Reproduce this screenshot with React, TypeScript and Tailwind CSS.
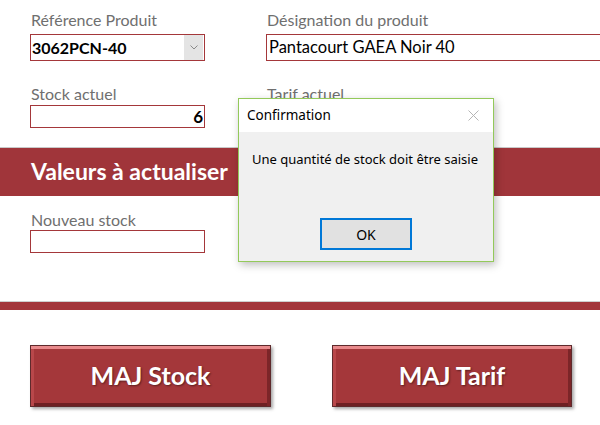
import React from "react";

const Label = ({ children }: { children: React.ReactNode }) => (
  <div className="h-[20px] text-[16px] leading-[20px] text-[#6f6f6f] pl-[1px]">{children}</div>
);

const ActionButton = ({ children }: { children: React.ReactNode }) => (
  <button
    type="button"
    className="h-[62px] flex items-center justify-center bg-[#a4373a] border border-[#5e2a2c] text-white font-bold text-[25px] shadow-[inset_0_3px_0_#e88a8c,inset_3px_0_0_#b8474a,inset_-3px_0_0_#7c2528,inset_0_-3px_0_#6e2023,2px_2px_3px_rgba(0,0,0,0.35)] [text-shadow:1px_1px_2px_rgba(0,0,0,0.45)]"
  >
    {children}
  </button>
);

export default function App() {
  return (
    <div className="relative w-[600px] h-[425px] overflow-hidden bg-white font-['Lato',sans-serif]">
      {/* top fields */}
      <div className="flex pt-[10px] pl-[30px]">
        <div className="w-[175px] shrink-0">
          <Label>Référence Produit</Label>
          <div className="mt-[4px] h-[27px] border border-[#a4373a] flex items-center">
            <span className="flex-1 pl-[1px] text-[16px] font-bold text-black">3062PCN-40</span>
            <span className="w-[19px] h-[25px] mr-[1px] bg-[#e4e4e4] flex items-center justify-center">
              <svg width="8" height="5" viewBox="0 0 8 5">
                <path d="M0.5 0.5 L4 4 L7.5 0.5" fill="none" stroke="#8a8a8a" strokeWidth="1" />
              </svg>
            </span>
          </div>
          <div className="mt-[23px]">
            <Label>Stock actuel</Label>
          </div>
          <div className="mt-[1px] h-[23px] border border-[#a4373a] flex items-center justify-end pr-[1px] text-[17px] font-bold text-black">
            6
          </div>
        </div>
        <div className="ml-[61px] w-[360px] shrink-0">
          <Label>Désignation du produit</Label>
          <div className="mt-[4px] h-[27px] border border-[#a4373a] flex items-center pl-[2px] text-[16.5px] text-black">
            Pantacourt GAEA Noir 40
          </div>
          <div className="mt-[23px]">
            <Label>Tarif actuel</Label>
          </div>
        </div>
      </div>

      {/* banner */}
      <div className="mt-[19px] h-[49px] border-t border-[#c9c9c9] bg-[#a0353a] flex items-center pl-[31px]">
        <span className="text-white font-bold text-[23px] pb-[2px]">Valeurs à actualiser</span>
      </div>

      <div className="pl-[30px] mt-[14px]">
        <Label>Nouveau stock</Label>
        <div className="w-[175px] h-[23px] border border-[#a4373a]" />
      </div>

      <div className="mt-[48px] h-[9px] border-t border-[#cfcfcf] bg-[#a3363b]" />

      <div className="mt-[35px] flex gap-[61px] pl-[30px]">
        <div className="w-[241px] flex flex-col">
          <ActionButton>MAJ Stock</ActionButton>
        </div>
        <div className="w-[240px] flex flex-col">
          <ActionButton>MAJ Tarif</ActionButton>
        </div>
      </div>

      {/* message box */}
      <div className="absolute left-[238px] top-[98px] w-[256px] h-[164px] border border-[#93c95a] bg-[#f0f0f0] flex flex-col shadow-[2px_3px_8px_rgba(0,0,0,0.25)] font-['Noto_Sans',sans-serif]">
        <div className="h-[33px] bg-white flex items-center justify-between pl-[8px] pr-[14px]">
          <span className="text-[13.5px] text-black">Confirmation</span>
          <svg width="11" height="11" viewBox="0 0 11 11">
            <path d="M0.5 0.5 L10.5 10.5 M10.5 0.5 L0.5 10.5" stroke="#b5b5b5" strokeWidth="1" />
          </svg>
        </div>
        <div className="pl-[13px] pt-[18px] text-[13px] text-black">
          Une quantité de stock doit être saisie
        </div>
        <div className="mt-auto mb-[11px] ml-[81px] w-[92px] h-[32px] bg-[#e1e1e1] border-2 border-[#0078d7] flex items-center justify-center text-[14px] text-black">
          OK
        </div>
      </div>
    </div>
  );
}
